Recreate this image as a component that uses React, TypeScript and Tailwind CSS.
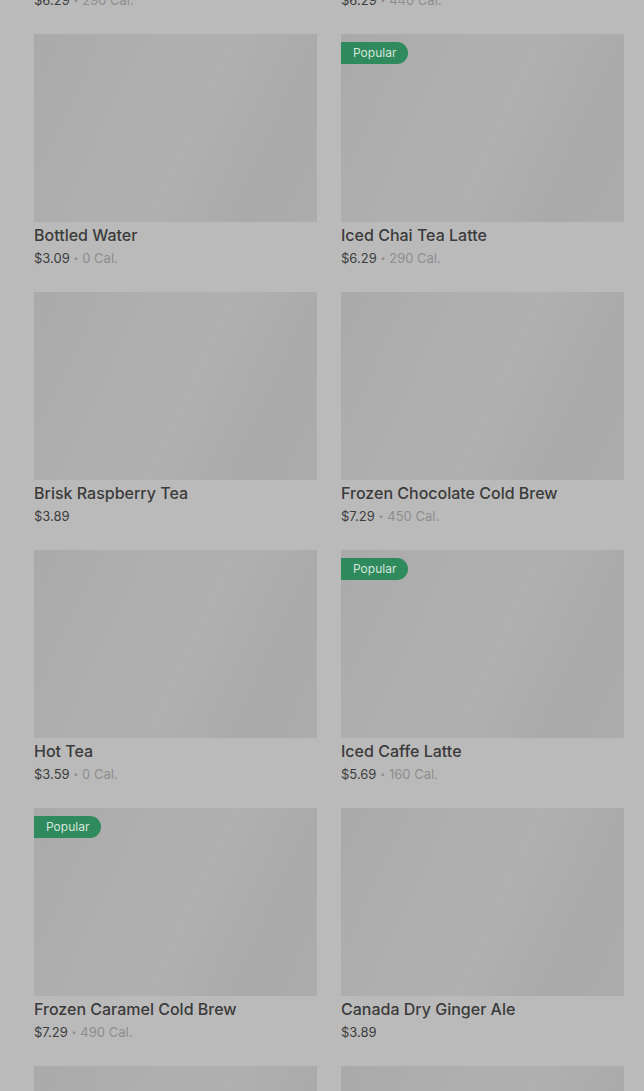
type Item = {
    name: string,
    price: string,
    cal?: string,
    popular?: boolean
}

const items: Item[] = [
    { name: "Iced Caramel Macchiato", price: "$6.29", cal: "290 Cal." },
    { name: "Iced Brown Sugar Oatmilk", price: "$6.29", cal: "440 Cal." },
    { name: "Bottled Water", price: "$3.09", cal: "0 Cal." },
    { name: "Iced Chai Tea Latte", price: "$6.29", cal: "290 Cal.", popular: true },
    { name: "Brisk Raspberry Tea", price: "$3.89" },
    { name: "Frozen Chocolate Cold Brew", price: "$7.29", cal: "450 Cal." },
    { name: "Hot Tea", price: "$3.59", cal: "0 Cal." },
    { name: "Iced Caffe Latte", price: "$5.69", cal: "160 Cal.", popular: true },
    { name: "Frozen Caramel Cold Brew", price: "$7.29", cal: "490 Cal.", popular: true },
    { name: "Canada Dry Ginger Ale", price: "$3.89" },
    { name: "Iced Coffee", price: "$3.99", cal: "80 Cal." },
    { name: "Lemonade", price: "$3.49", cal: "190 Cal." },
]

const MenuCard = ({ name, price, cal, popular }: Item) => {
    return (
        <div className="flex flex-col">
            <div className="relative h-[188px] w-full bg-[linear-gradient(115deg,#aaaaaa_0%,#afafaf_35%,#b0b0b0_55%,#aaaaaa_80%,#acacac_100%)]">
                { popular && (
                    <span className="absolute left-0 top-[8px] flex h-[22px] items-center rounded-l-[3px] rounded-r-full bg-[#2f8a5d] pl-[12px] pr-[12px] text-[12px] leading-none text-[#d6e6dc]">
                        Popular
                    </span>
                ) }
            </div>
            <div className="mt-[1px] text-[16px] font-medium leading-6 text-[#3b3b3b]">{name}</div>
            <div className="mt-[2px] flex items-center text-[13px] leading-[18px]">
                <span className="text-[#3d3d3d]">{price}</span>
                { cal && (
                    <>
                        <span className="mx-[4px] text-[8px] text-[#8a8a8a]">•</span>
                        <span className="text-[#8e8e8e]">{cal}</span>
                    </>
                ) }
            </div>
        </div>
    )
}

export default function App() {
    return (
        <div className="h-[1091px] overflow-hidden bg-[#bababa] font-['Inter','Liberation_Sans',sans-serif]">
            <div className="-mt-[224px] grid grid-cols-2 gap-x-[24px] gap-y-[25px] pl-[34px] pr-[20px]">
                { items.map((item) => (
                    <MenuCard key={item.name} {...item} />
                )) }
            </div>
        </div>
    )
}
